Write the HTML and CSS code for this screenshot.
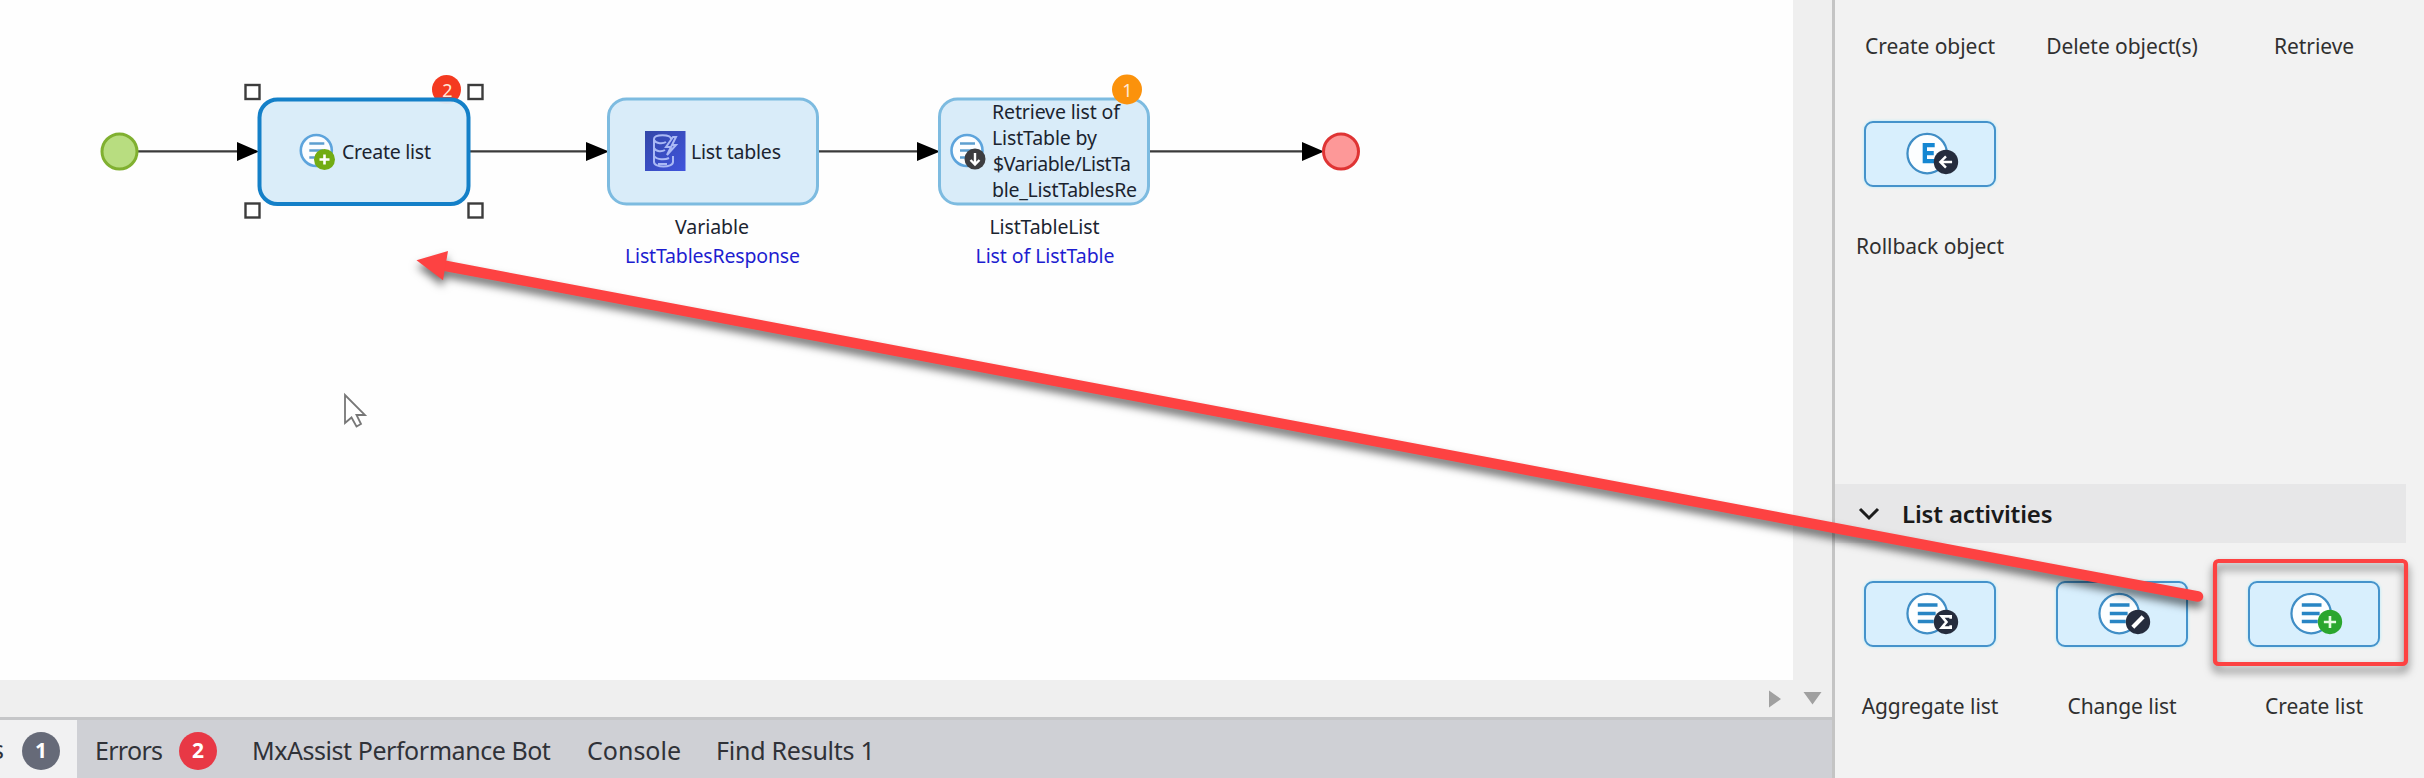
FILE: index.html
```html
<!DOCTYPE html>
<html lang="en">
<head>
<meta charset="utf-8">
<title>Microflow editor</title>
<link rel="stylesheet" href="styles.css">
</head>
<body>
<div class="app">
  <main class="editor">
    <div class="work">
      <svg class="canvas" width="1793" height="680" viewBox="0 0 1793 680">
        <defs>
          <linearGradient id="aws" x1="0" y1="0" x2="1" y2="1"><stop offset="0" stop-color="#3347a8"/><stop offset="1" stop-color="#4054dd"/></linearGradient>
          <g id="list">
            <circle r="15.5" fill="#fbfdff" stroke="#5da4dc" stroke-width="2.6"/>
            <path d="M-7-7H8M-7 0H7M-7 7H3" stroke="#5d9fd0" stroke-width="2.600"/>
          </g>
        </defs>
        <g class="wires">
          <path d="M138 151.3H240M470 151.3H588M819 151.3H920M1150 151.3H1304"/>
          <path class="head" d="M237 142v19l22-9.500zM586 142v19l23-9.500zM917 142v19l23-9.500zM1302 142v19l22-9.500z"/>
        </g>
        <circle class="start" cx="119.500" cy="151.500" r="17.500"/>
        <circle class="end" cx="1341" cy="151.500" r="17.500"/>

        <circle cx="446.500" cy="89.500" r="14.500" fill="#f43a20"/>
        <text class="count" x="447.500" y="97">2</text>
        <rect class="node selected" x="259.500" y="99.500" width="209" height="104.500" rx="18"/>
        <g class="handles"><rect x="245.500" y="85" width="14" height="14"/><rect x="468.500" y="85" width="14" height="14"/><rect x="245.500" y="203.500" width="14" height="14"/><rect x="468.500" y="203.500" width="14" height="14"/></g>
        <use href="#list" x="316.300" y="150.500"/>
        <circle cx="324.500" cy="159.500" r="10.500" fill="#72ac12"/><path d="M319.500 159.500h10M324.500 154.500v10" stroke="#fff" stroke-width="2.600"/>
        <text x="342" y="159" textLength="89">Create list</text>

        <rect class="node" x="608.500" y="99" width="209" height="105" rx="18"/>
        <rect x="645" y="131" width="40.500" height="40" fill="url(#aws)"/>
        <g fill="none" stroke="#aab9f5" stroke-width="2"><path d="M671 139c0-5-17-5-17 0v23c0 6 19 6 19 0v-6M654 140c2 4 9 4 12 2M654 148c2 4 8 4 11 2M654 156c3 4 11 4 15 2M658 164h9M673 137l-7 10h5l-4 8 9-10h-4l4-8z"/></g>
        <text x="691" y="159" textLength="90">List tables</text>
        <text x="675" y="234" textLength="74">Variable</text>
        <text class="type" x="625" y="263" textLength="175">ListTablesResponse</text>

        <rect class="node" x="939.500" y="99" width="209" height="105" rx="18"/>
        <circle cx="1127" cy="89.500" r="15" fill="#fb920c"/>
        <text class="count" x="1127.500" y="97">1</text>
        <use href="#list" x="967" y="150.500"/>
        <circle cx="975" cy="159" r="10.500" fill="#3d3d40"/><path d="M975 153v11M970.500 160l4.500 4.500 4.500-4.500" fill="none" stroke="#fff" stroke-width="2.400"/>
        <text x="992" y="119" textLength="128">Retrieve list of</text>
        <text x="992" y="145" textLength="105">ListTable by</text>
        <text x="993" y="171" textLength="138">$Variable/ListTa</text>
        <text x="992" y="197" textLength="145">ble_ListTablesRe</text>
        <text x="989.500" y="234" textLength="110">ListTableList</text>
        <text class="type" x="975.500" y="263" textLength="139">List of ListTable</text>
        <path class="cursor" d="M345 395v28l6.500-5.500 5 9 4.500-2.500-4.500-9h8.500z"/>
      </svg>
      <div class="vscroll"></div>
    </div>
    <div class="hscroll">
      <svg width="64" height="37" viewBox="0 0 64 37"><path d="M2 10.500v17l12-8.500zM36.500 12h18l-9 12.500z" fill="#a0a0a0"/></svg>
    </div>
    <nav class="tabs">
      <div class="tab active"><span class="cut">s</span><span class="pill">1</span></div>
      <div class="tab errors"><span>Errors</span><span class="pill red">2</span></div>
      <div class="tab bot">MxAssist Performance Bot</div>
      <div class="tab console">Console</div>
      <div class="tab find">Find Results 1</div>
    </nav>
  </main>

  <aside class="toolbox">
    <section class="grid objects">
      <div class="item"><span>Create object</span></div>
      <div class="item"><span>Delete object(s)</span></div>
      <div class="item"><span>Retrieve</span></div>
      <div class="item second">
        <svg class="tile" width="132" height="66" viewBox="0 0 132 66"><circle class="disc" cx="63" cy="32.500" r="21"/><path d="M71 23.500H60.500v17H71M60.500 32H70" fill="none" stroke="#1587d2" stroke-width="4.600"/><circle cx="83" cy="41.500" r="13" fill="#252c3d"/><path d="M89.500 41.500h-12M83 35.500l-6 6 6 6" fill="none" stroke="#fff" stroke-width="2.600"/></svg>
        <span>Rollback object</span>
      </div>
    </section>
    <header class="group">
      <svg width="22" height="14" viewBox="0 0 22 14"><path d="M2 2l9 9 9-9" fill="none" stroke="#1c1c1c" stroke-width="3"/></svg>
      <span>List activities</span>
    </header>
    <section class="grid lists">
      <div class="item">
        <svg class="tile" width="132" height="66" viewBox="0 0 132 66"><circle class="disc" cx="63" cy="32.500" r="21"/><path class="rows" d="M53 23.500h21M53 32.500h19M53 41h17"/><circle cx="83" cy="41.500" r="13" fill="#252c3d"/><path d="M88 38v-2.500H78.500l5 6-5 6H88V45" fill="none" stroke="#fff" stroke-width="2.800"/></svg>
        <span>Aggregate list</span>
      </div>
      <div class="item">
        <svg class="tile" width="132" height="66" viewBox="0 0 132 66"><circle class="disc" cx="63" cy="32.500" r="21"/><path class="rows" d="M53 23.500h21M53 32.500h19M53 41h17"/><circle cx="83" cy="41.500" r="13" fill="#252c3d"/><path d="M77.500 47l11-11" stroke="#fff" stroke-width="4.500"/></svg>
        <span>Change list</span>
      </div>
      <div class="item">
        <svg class="tile" width="132" height="66" viewBox="0 0 132 66"><circle class="disc" cx="63" cy="32.500" r="21"/><path class="rows" d="M53 23.500h21M53 32.500h19M53 41h17"/><circle cx="83" cy="41.500" r="13" fill="#2ba62e"/><path d="M76.500 41.500h13M83 35v13" stroke="#e6fbe2" stroke-width="2.800"/></svg>
        <span>Create list</span>
      </div>
    </section>
  </aside>

  <svg class="annotation" width="2424" height="778" viewBox="0 0 2424 778">
    <path d="M446 266L2198 596.500" stroke="#fd4242" stroke-width="10.500" stroke-linecap="round"/>
    <path d="M416.500 260.300L448 251 443 280.300z" fill="#fd4242"/>
    <rect x="2215" y="561" width="191" height="103" rx="3.500" fill="none" stroke="#fd4242" stroke-width="4.200"/>
  </svg>
</div>
</body>
</html>
```
FILE: styles.css
```css
* { box-sizing: border-box; }
body { margin: 0; font-family: "Noto Sans", "Open Sans", sans-serif; color: #303030; }
.app { position: relative; display: flex; width: 2424px; height: 778px; overflow: hidden; background: #f2f2f2; }

.editor { display: flex; flex-direction: column; width: 1832px; }
.work { display: flex; height: 680px; }
.canvas { display: block; background: #fefefe; font-size: 19.5px; }
.canvas text { fill: #1b2430; }
.canvas .type { fill: #1d1dd0; }
.canvas .count { fill: #ffe9d6; font-size: 18px; text-anchor: middle; }
.wires { stroke: #3a3a3a; stroke-width: 2.2; fill: none; }
.wires .head { fill: #000; stroke: none; }
.start { fill: #b8dd80; stroke: #80b030; stroke-width: 3; }
.end { fill: #fd9898; stroke: #df3434; stroke-width: 3; }
.node { fill: #d9ecf9; stroke: #7dbbe0; stroke-width: 3; }
.node.selected { stroke: #1480c8; stroke-width: 4; fill-opacity: .96; }
.handles { fill: #fff; stroke: #3c3c3c; stroke-width: 2.4; }
.cursor { fill: #fff; stroke: #777; stroke-width: 1.8; }
.vscroll { flex: 1; background: #efefef; }
.hscroll { display: flex; justify-content: flex-end; height: 37px; background: #efefef; padding-right: 1px; }

.tabs { display: flex; height: 61px; border-top: 3px solid #c5c6c8; background: #cfd0d5; font-size: 25px; line-height: 62px; white-space: nowrap; color: #303238; }
.tab { display: flex; align-items: center; height: 58px; padding-top: 2px; }
.active { width: 77px; padding-top: 0; background: #f1f1f2; }
.cut { width: 22px; margin-left: -8px; }
.pill { width: 38px; height: 38px; margin-top: 4px; border-radius: 50%; background: #666a78; color: #fff; font-size: 21px; font-weight: 700; line-height: 37px; text-align: center; letter-spacing: 0; }
.active .pill { margin-left: 8px; }
.errors { justify-content: space-between; width: 140px; margin-right: 35px; padding-left: 18px; letter-spacing: -.7px; }
.errors .pill { margin-top: 2px; }
.red { background: #e83845; }
.bot { width: 335px; letter-spacing: -.45px; }
.console { width: 129px; }
.find { letter-spacing: -.25px; }

.toolbox { width: 592px; border-left: 3px solid #c4c4c4; background: #f2f2f2; }
.grid { display: grid; grid-template-columns: repeat(3, 192px); margin-left: -1px; }
.objects { height: 484px; grid-template-rows: 121px 1fr; }
.item { display: flex; flex-direction: column; align-items: center; font-size: 21px; line-height: 30px; white-space: nowrap; letter-spacing: -.05px; }
.objects .item:not(.second) { padding-top: 31px; }
.tile { display: block; margin-bottom: 44px; border: 2.5px solid #4593cb; border-radius: 9px; background: #d8effd; box-shadow: 0 0 3px #a9ecff; }
.disc { fill: #fcfeff; stroke: #408ec6; stroke-width: 2.4; }
.rows { stroke: #2785c4; stroke-width: 3.8; }
.group { display: flex; align-items: center; width: 571px; height: 59px; padding-left: 23px; gap: 22px; background: #e7e7e8; color: #1a1a1a; font-size: 24px; font-weight: 600; letter-spacing: -.15px; }
.lists { padding-top: 38px; }

.annotation { position: absolute; inset: 0; filter: drop-shadow(0 6px 4px rgba(0, 0, 0, .55)); }
```
